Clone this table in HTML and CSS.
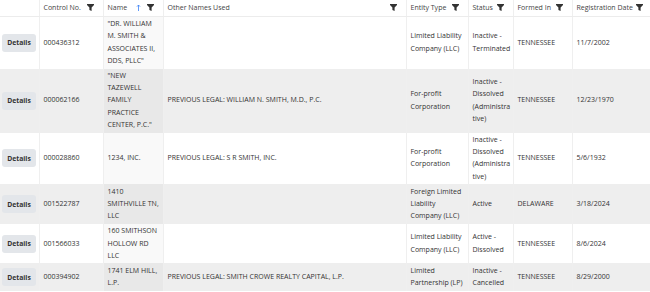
FILE: index.html
```html
<!DOCTYPE html>
<html lang="en">
<head>
    <meta charset="UTF-8">
    <meta name="viewport" content="width=device-width, initial-scale=1.0">
    <title>Business Search Results</title>
    <link rel="stylesheet" href="styles.css">
</head>
<body>
    <table class="results">
        <colgroup>
            <col class="c-action">
            <col class="c-control">
            <col class="c-name">
            <col class="c-other">
            <col class="c-type">
            <col class="c-status">
            <col class="c-formed">
            <col class="c-date">
        </colgroup>
        <thead>
            <tr>
                <th></th>
                <th><div class="th-inner"><span>Control No.</span><svg class="filter" viewBox="0 0 7 7"><path d="M0 0H7V1L4.6 3.4V7L2.4 6V3.4L0 1Z"/></svg></div></th>
                <th><div class="th-inner"><span>Name <svg class="sort" viewBox="0 0 5 7"><path d="M2.5 7V1M1 2.6L2.5 1L4 2.6"/></svg></span><svg class="filter" viewBox="0 0 7 7"><path d="M0 0H7V1L4.6 3.4V7L2.4 6V3.4L0 1Z"/></svg></div></th>
                <th><div class="th-inner"><span>Other Names Used</span><svg class="filter" viewBox="0 0 7 7"><path d="M0 0H7V1L4.6 3.4V7L2.4 6V3.4L0 1Z"/></svg></div></th>
                <th><div class="th-inner"><span>Entity Type</span><svg class="filter" viewBox="0 0 7 7"><path d="M0 0H7V1L4.6 3.4V7L2.4 6V3.4L0 1Z"/></svg></div></th>
                <th><div class="th-inner"><span>Status</span><svg class="filter" viewBox="0 0 7 7"><path d="M0 0H7V1L4.6 3.4V7L2.4 6V3.4L0 1Z"/></svg></div></th>
                <th><div class="th-inner"><span>Formed In</span><svg class="filter" viewBox="0 0 7 7"><path d="M0 0H7V1L4.6 3.4V7L2.4 6V3.4L0 1Z"/></svg></div></th>
                <th><div class="th-inner"><span>Registration Date</span><svg class="filter" viewBox="0 0 7 7"><path d="M0 0H7V1L4.6 3.4V7L2.4 6V3.4L0 1Z"/></svg></div></th>
            </tr>
        </thead>
        <tbody>
            <tr>
                <td><button class="btn-details">Details</button></td>
                <td>000436312</td>
                <td class="sorted">"DR. WILLIAM M. SMITH &amp; ASSOCIATES II, DDS, PLLC"</td>
                <td></td>
                <td>Limited Liability Company (LLC)</td>
                <td>Inactive - Terminated</td>
                <td>TENNESSEE</td>
                <td>11/7/2002</td>
            </tr>
            <tr>
                <td><button class="btn-details">Details</button></td>
                <td>000062166</td>
                <td class="sorted">"NEW TAZEWELL FAMILY PRACTICE CENTER, P.C."</td>
                <td>PREVIOUS LEGAL: WILLIAM N. SMITH, M.D., P.C.</td>
                <td>For-profit Corporation</td>
                <td>Inactive - Dissolved (Administrative)</td>
                <td>TENNESSEE</td>
                <td>12/23/1970</td>
            </tr>
            <tr>
                <td><button class="btn-details">Details</button></td>
                <td>000028860</td>
                <td class="sorted">1234, INC.</td>
                <td>PREVIOUS LEGAL: S R SMITH, INC.</td>
                <td>For-profit Corporation</td>
                <td>Inactive - Dissolved (Administrative)</td>
                <td>TENNESSEE</td>
                <td>5/6/1932</td>
            </tr>
            <tr>
                <td><button class="btn-details">Details</button></td>
                <td>001522787</td>
                <td class="sorted">1410 SMITHVILLE TN, LLC</td>
                <td></td>
                <td>Foreign Limited Liability Company (LLC)</td>
                <td>Active</td>
                <td>DELAWARE</td>
                <td>3/18/2024</td>
            </tr>
            <tr>
                <td><button class="btn-details">Details</button></td>
                <td>001566033</td>
                <td class="sorted">160 SMITHSON HOLLOW RD LLC</td>
                <td></td>
                <td>Limited Liability Company (LLC)</td>
                <td>Active - Dissolved</td>
                <td>TENNESSEE</td>
                <td>8/6/2024</td>
            </tr>
            <tr>
                <td><button class="btn-details">Details</button></td>
                <td>000394902</td>
                <td class="sorted">1741 ELM HILL, L.P.</td>
                <td>PREVIOUS LEGAL: SMITH CROWE REALTY CAPITAL, L.P.</td>
                <td>Limited Partnership (LP)</td>
                <td>Inactive - Cancelled</td>
                <td>TENNESSEE</td>
                <td>8/29/2000</td>
            </tr>
        </tbody>
    </table>
</body>
</html>
```

FILE: styles.css
```css
body {
    margin: 0;
    font-family: "Open Sans", "Noto Sans", sans-serif;
    font-size: 7px;
    color: #333;
    background-color: white;
}

.results {
    width: 650px;
    table-layout: fixed;
    border-collapse: collapse;
}

.c-action { width: 39px; }
.c-control { width: 64px; }
.c-name { width: 60px; }
.c-other { width: 243px; }
.c-type { width: 62px; }
.c-status { width: 45px; }
.c-formed { width: 59px; }
.c-date { width: 78px; }

th, td {
    border-right: 1px solid #efefef;
    text-align: left;
    vertical-align: middle;
    overflow-wrap: anywhere;
}

th:last-child, td:last-child {
    border-right: none;
}

th {
    font-weight: normal;
    color: #444;
    line-height: 12.6px;
    padding: 1.6px 9px 1.6px 4px;
    border-bottom: 1px solid #ececec;
}

th:last-child {
    padding-right: 7px;
}

td {
    line-height: 12.25px;
    padding: 1.4px 1px 1.4px 4px;
}

td:first-child {
    padding: 0 2px;
}

.th-inner {
    display: flex;
    justify-content: space-between;
    align-items: center;
}

.filter {
    width: 7px;
    height: 7px;
    fill: #333;
    flex-shrink: 0;
}

.sort {
    width: 5px;
    height: 7px;
    margin-left: 7px;
    vertical-align: -1px;
    fill: none;
    stroke: #3b82f6;
    stroke-width: 0.8;
}

tbody tr:nth-child(even) {
    background-color: #eeeeee;
}

td.sorted {
    background-color: rgba(0, 0, 0, 0.025);
}

.btn-details {
    font-family: inherit;
    font-size: 6.8px;
    font-weight: bold;
    color: #333;
    background-color: #e3e6ea;
    border: none;
    border-radius: 3px;
    width: 34px;
    height: 18px;
    padding: 0;
    cursor: pointer;
}
```
